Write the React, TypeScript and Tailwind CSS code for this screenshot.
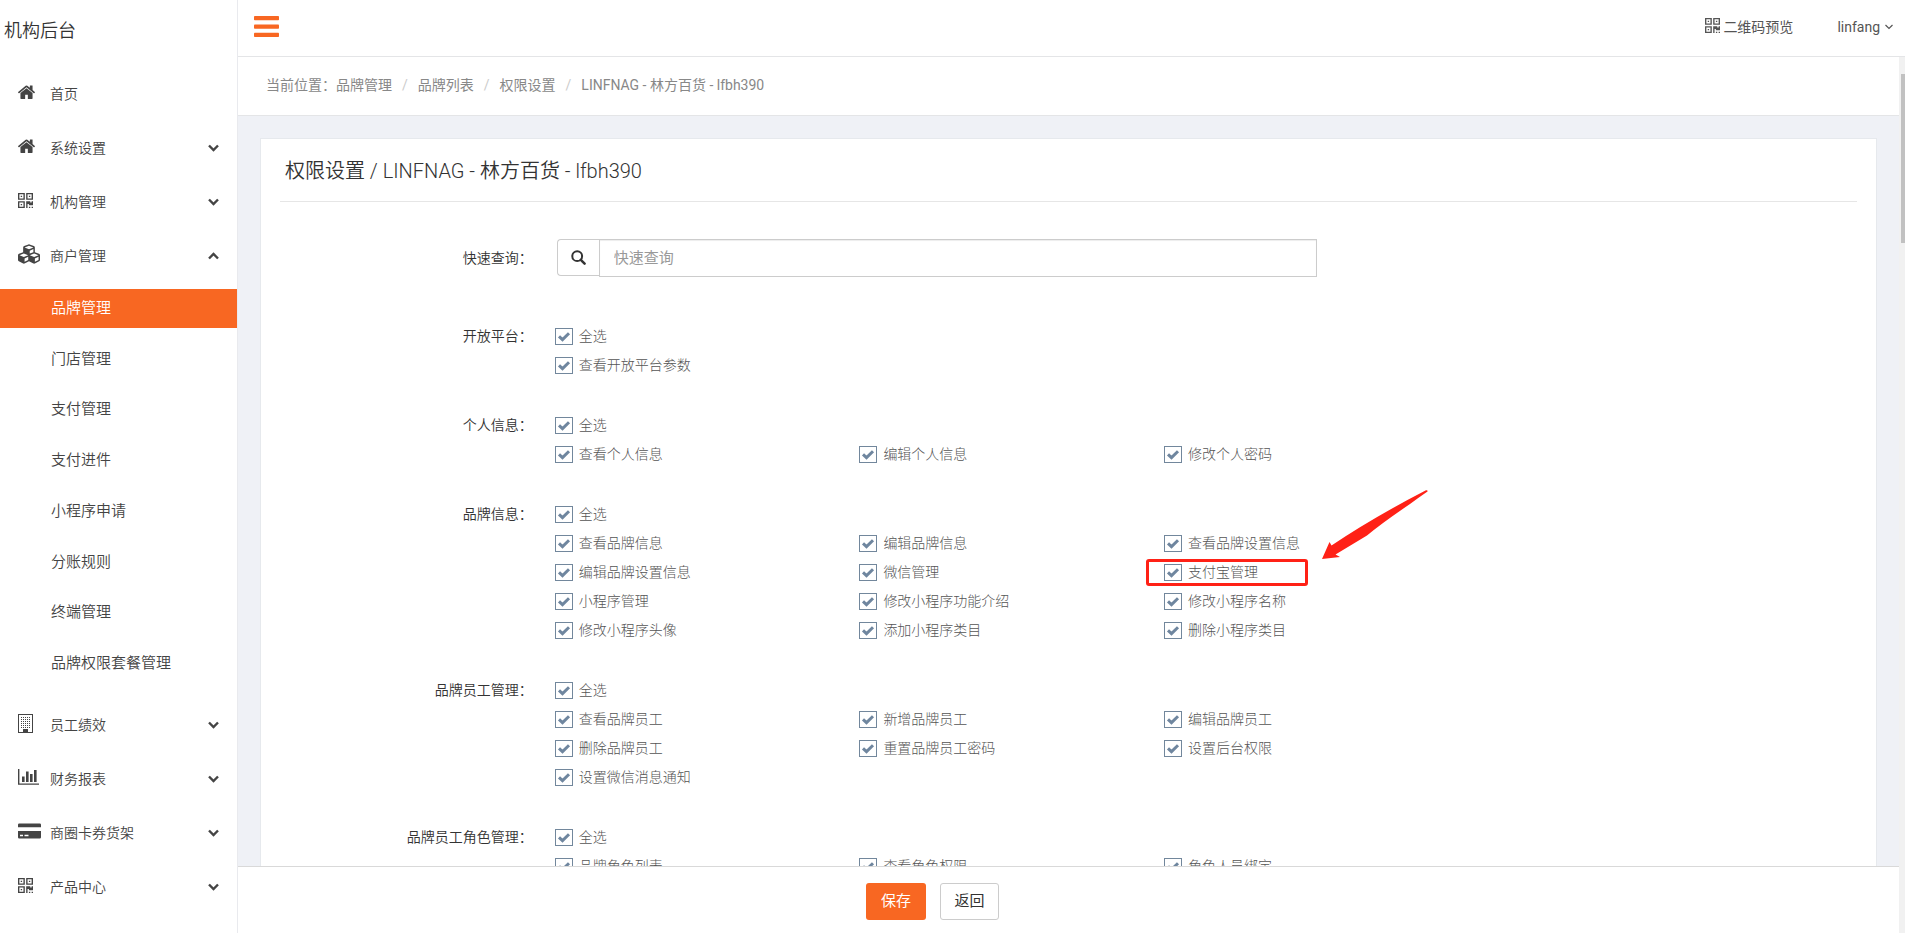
import { useState } from "react";
import type { ReactNode } from "react";
import { FaCubes } from "react-icons/fa";

type MenuItem = {
  title: string;
  icon: ReactNode;
  children?: string[];
  noArrow?: boolean;
};

type Group = {
  label: string;
  options: string[];
};

const HomeIcon = () => (
  <svg viewBox="88 220 1616 1320" className="h-3.5 w-[17px]" fill="currentColor">
    <path d="M1472 992v480q0 26-19 45t-45 19h-384v-384h-256v384h-384q-26 0-45-19t-19-45v-480q0-1 .5-3t.5-3l575-474 575 474q1 2 1 6zm223-69l-62 74q-8 9-21 11h-3q-13 0-21-7l-692-577-692 577q-12 8-24 7-13-2-21-11l-62-74q-8-10-7-23.5t11-21.5l719-599q32-26 76-26t76 26l244 204v-195q0-14 9-23t23-9h192q14 0 23 9t9 23v408l219 182q10 8 11 21.5t-7 23.5z" />
  </svg>
);

const QrIcon = () => (
  <svg viewBox="0 0 1408 1408" className="size-[15px]" fill="currentColor">
    <path d="M384 1024v128h-128v-128h128zm0-768v128h-128v-128h128zm768 0v128h-128v-128h128zm-1024 1023h384v-383h-384v383zm0-767h384v-384h-384v384zm768 0h384v-384h-384v384zm-256 256v640h-640v-640h640zm512 512v128h-128v-128h128zm256 0v128h-128v-128h128zm0-512v384h-384v-128h-128v384h-128v-640h384v128h128v-128h128zm-768-768v640h-640v-640h640zm768 0v640h-640v-640h640z" />
  </svg>
);

const BuildingIcon = () => (
  <svg viewBox="0 0 15 19" className="h-[19px] w-[15px]">
    <rect x="0.5" y="0.5" width="14" height="18" fill="none" stroke="currentColor" />
    <path
      d="M3 3.5h9M3 5.5h9M3 7.5h9M3 9.5h9M3 11.5h9M3 13.5h9"
      stroke="currentColor"
      strokeDasharray="1 1"
    />
    <path d="M5 15h5v3h-5z" fill="currentColor" />
  </svg>
);

const ChartIcon = () => (
  <svg viewBox="0 0 21 16" className="h-4 w-[21px]" fill="currentColor">
    <path d="M0 0h1.4v14.4H21v1.4H0zM4 7.5h2.6v5.5H4zM8 2.5h2.6V13H8zM12 5h2.6v8H12zM16 1h2.6v12H16z" />
  </svg>
);

const CardIcon = () => (
  <svg viewBox="0 0 23 16" className="h-4 w-[23px]" fill="currentColor">
    <path
      fillRule="evenodd"
      d="M1.2 0.5h20.6q1.2 0 1.2 1.2v2.6H0V1.7Q0 .5 1.2.5zM0 8h23v6.3q0 1.2-1.2 1.2H1.2Q0 15.5 0 14.3zM2 11.8v1.4h3v-1.4zM6.5 11.8v1.4h4v-1.4z"
    />
  </svg>
);

const Chevron = ({ up = false }: { up?: boolean }) => (
  <svg viewBox="0 0 11 8" className="h-2 w-[11px]" fill="none" stroke="currentColor" strokeWidth="2.4">
    <path d={up ? "M1 6.5L5.5 2L10 6.5" : "M1 1.5L5.5 6L10 1.5"} />
  </svg>
);

const SearchIcon = () => (
  <svg viewBox="0 0 15 15" className="size-[15px]" fill="none" stroke="currentColor">
    <circle cx="6.2" cy="6.2" r="4.9" strokeWidth="2" />
    <path d="M9.8 9.8L13.6 13.6" strokeWidth="2.5" strokeLinecap="round" />
  </svg>
);

const menu: MenuItem[] = [
  { title: "首页", icon: <HomeIcon />, noArrow: true },
  { title: "系统设置", icon: <HomeIcon /> },
  { title: "机构管理", icon: <QrIcon /> },
  {
    title: "商户管理",
    icon: <FaCubes className="size-[22px]" />,
    children: [
      "品牌管理",
      "门店管理",
      "支付管理",
      "支付进件",
      "小程序申请",
      "分账规则",
      "终端管理",
      "品牌权限套餐管理",
    ],
  },
  { title: "员工绩效", icon: <BuildingIcon /> },
  { title: "财务报表", icon: <ChartIcon /> },
  { title: "商圈卡券货架", icon: <CardIcon /> },
  { title: "产品中心", icon: <QrIcon /> },
];

const crumbs = ["品牌管理", "品牌列表", "权限设置", "LINFNAG - 林方百货 - lfbh390"];

const groups: Group[] = [
  { label: "开放平台", options: ["查看开放平台参数"] },
  { label: "个人信息", options: ["查看个人信息", "编辑个人信息", "修改个人密码"] },
  {
    label: "品牌信息",
    options: [
      "查看品牌信息",
      "编辑品牌信息",
      "查看品牌设置信息",
      "编辑品牌设置信息",
      "微信管理",
      "支付宝管理",
      "小程序管理",
      "修改小程序功能介绍",
      "修改小程序名称",
      "修改小程序头像",
      "添加小程序类目",
      "删除小程序类目",
    ],
  },
  {
    label: "品牌员工管理",
    options: [
      "查看品牌员工",
      "新增品牌员工",
      "编辑品牌员工",
      "删除品牌员工",
      "重置品牌员工密码",
      "设置后台权限",
      "设置微信消息通知",
    ],
  },
  { label: "品牌员工角色管理", options: ["品牌角色列表", "查看角色权限", "角色人员绑定"] },
];

// red frame and arrow around the option being pointed out
const Callout = () => (
  <>
    <span className="pointer-events-none absolute top-px -left-[18px] h-[27px] w-[162px] rounded-[3px] border-3 border-[#ff2116]" />
    <svg
      viewBox="0 0 106 70"
      className="pointer-events-none absolute -top-[68px] left-[158px] h-[70px] w-[106px]"
      fill="#ff2116"
    >
      <path d="M0 69L7.5 52L9.5 55.5Q52 27 104 0.3Q106 0 105.5 1.5Q96 8 88 14Q60 33 45 45.5L13.5 64.5L18 67Z" />
    </svg>
  </>
);

type OptionProps = {
  text: string;
  checked: boolean;
  onChange: () => void;
};

const Option = ({ text, checked, onChange }: OptionProps) => (
  <label className="relative flex h-[29px] items-center gap-1.5 text-sm font-light text-[#555]">
    <span className="relative flex">
      <input
        type="checkbox"
        checked={checked}
        onChange={onChange}
        className="h-[17px] w-[18px] appearance-none border border-[#72879c] bg-white"
      />
      {checked && (
        <svg
          viewBox="0 0 18 17"
          className="pointer-events-none absolute inset-0 h-[17px] w-[18px]"
          fill="none"
          stroke="#6f869f"
          strokeWidth="3"
        >
          <path d="M4 8.3L7.5 11.6L14 5.2" />
        </svg>
      )}
    </span>
    <span className="pb-0.5">{text}</span>
    {text === "支付宝管理" && <Callout />}
  </label>
);

const PermissionGroup = ({ label, options }: Group) => {
  const [selected, setSelected] = useState<string[]>(options);
  const all = selected.length === options.length;

  const toggle = (name: string) => {
    setSelected((prev) =>
      prev.includes(name) ? prev.filter((n) => n !== name) : [...prev, name]
    );
  };

  return (
    <fieldset className="flex" aria-label={label}>
      <div className="w-1/6 pr-2.5 text-right text-sm leading-[29px] font-[350] text-[#333]">
        {label}：
      </div>
      <div className="ml-3 w-[58%] pr-px">
        <Option text="全选" checked={all} onChange={() => setSelected(all ? [] : options)} />
        <div className="grid grid-cols-3">
          {options.map((name) => (
            <Option
              key={name}
              text={name}
              checked={selected.includes(name)}
              onChange={() => toggle(name)}
            />
          ))}
        </div>
      </div>
    </fieldset>
  );
};

const Sidebar = () => (
  <aside className="w-[238px] shrink-0 overflow-hidden border-r border-[#e9eaee] bg-white font-[350] text-[#444]">
    <h1 className="h-[67px] pl-1 text-lg leading-[62px] text-[#333]">机构后台</h1>
    <nav>
      {menu.map((item) => (
        <div key={item.title}>
          <a href="#" className="flex h-[54px] items-center pr-[18px] pl-[18px] text-sm">
            <span className="flex w-8 shrink-0 pb-1">{item.icon}</span>
            <span className="flex-1">{item.title}</span>
            {!item.noArrow && <Chevron up={!!item.children} />}
          </a>
          {item.children && (
            <ul className="mt-1.5 mb-[15px] flex h-[394px] flex-col justify-between">
              {item.children.map((name, i) => (
                <li key={name}>
                  <a
                    href="#"
                    className={
                      i === 0
                        ? "block bg-[#f86722] pl-[51px] text-[15px] leading-[39px] text-white"
                        : "block pl-[51px] text-[15px] leading-[39px]"
                    }
                  >
                    {name}
                  </a>
                </li>
              ))}
            </ul>
          )}
        </div>
      ))}
    </nav>
  </aside>
);

const Header = () => (
  <header className="flex h-[57px] shrink-0 items-center border-b border-[#e4e5e7] bg-white pr-3 pl-4 text-sm text-[#555]">
    <button type="button" aria-label="菜单" className="mb-1 text-[#f86722]">
      <svg viewBox="0 0 25 21" className="h-[21px] w-[25px]" fill="currentColor">
        <rect width="25" height="4.3" rx="0.8" />
        <rect y="8.5" width="25" height="4.3" rx="0.8" />
        <rect y="16.7" width="25" height="4.3" rx="0.8" />
      </svg>
    </button>
    <a href="#" className="mr-11 mb-0.5 ml-auto flex items-center gap-[3px]">
      <span className="pb-1">
        <QrIcon />
      </span>
      二维码预览
    </a>
    <button type="button" className="mb-0.5 flex items-center gap-[5px]">
      linfang
      <svg viewBox="0 0 8 6" className="h-1.5 w-2" fill="none" stroke="currentColor" strokeWidth="1.2">
        <path d="M0.5 1L4 4.5L7.5 1" />
      </svg>
    </button>
  </header>
);

const App = () => {
  const [keyword, setKeyword] = useState("");

  return (
    <div className="flex h-screen overflow-hidden bg-white font-[Roboto,'Noto_Sans_CJK_SC',sans-serif]">
      <Sidebar />
      <div className="flex min-w-0 flex-1 flex-col">
        <Header />
        <div className="flex min-h-0 flex-1">
          <div className="flex min-w-0 flex-1 flex-col">
            <main className="min-h-0 flex-1 overflow-hidden bg-[#eff1f6]">
              <div className="flex h-[59px] items-center border-b border-[#e4e5e7] bg-white pb-0.5 pl-7 text-sm text-[#888]">
                <span>当前位置：</span>
                {crumbs.map((crumb, i) => (
                  <span key={crumb}>
                    {i > 0 && <span className="px-2.5 text-[#ccc]">/</span>}
                    <a href="#">{crumb}</a>
                  </span>
                ))}
              </div>

              <section className="mx-[22px] mt-[22px] border border-[#e6e9ed] bg-white px-[19px] pb-10">
                <h2 className="h-[63px] border-b border-[#e6e6e6] pl-[5px] text-xl leading-[64px] font-[350] text-[#333]">
                  权限设置 / LINFNAG - 林方百货 - lfbh390
                </h2>

                <div className="mt-[37px] flex">
                  <label
                    htmlFor="keyword"
                    className="w-1/6 pr-2.5 text-right text-sm leading-[38px] font-[350] text-[#333]"
                  >
                    快速查询：
                  </label>
                  <div className="flex w-1/2 items-start px-3.5">
                    <button
                      type="button"
                      aria-label="快速查询"
                      className="flex h-[37px] w-[42px] items-center justify-center rounded-l border border-r-0 border-[#ccc] text-[#333]"
                    >
                      <SearchIcon />
                    </button>
                    <input
                      id="keyword"
                      type="text"
                      value={keyword}
                      onChange={(e) => setKeyword(e.target.value)}
                      placeholder="快速查询"
                      className="h-[38px] min-w-0 flex-1 border border-[#ccc] px-3.5 text-[15px] shadow-[inset_0_1px_1px_#00000013] placeholder:text-[#999]"
                    />
                  </div>
                </div>

                <div className="mt-[45px] flex flex-col gap-[31px]">
                  {groups.map((group) => (
                    <PermissionGroup key={group.label} {...group} />
                  ))}
                </div>
              </section>
            </main>

            <footer className="flex h-[67px] shrink-0 items-center justify-center gap-3.5 border-t border-[#d9d9d9] bg-white pt-0.5 pr-[272px] text-[15px]">
              <button type="button" className="h-[37px] w-[60px] rounded-[3px] bg-[#f86722] text-white">
                保存
              </button>
              <button
                type="button"
                className="h-[37px] w-[59px] rounded-[3px] border border-[#ccc] bg-white text-[#333]"
              >
                返回
              </button>
            </footer>
          </div>

          {/* scroll track */}
          <div className="w-1.5 shrink-0 bg-[#f1f1f1] pt-[17px] pl-0.5">
            <div className="h-[169px] bg-[#c1c1c1]" />
          </div>
        </div>
      </div>
    </div>
  );
};

export default App;
